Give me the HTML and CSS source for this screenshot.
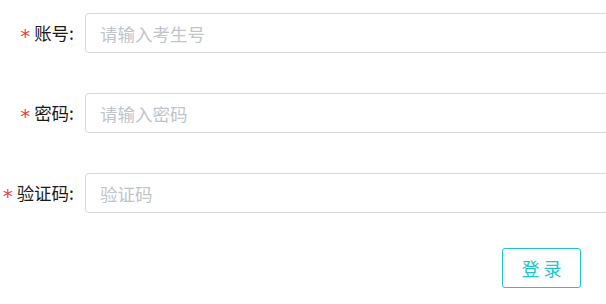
FILE: index.html
```html
<!DOCTYPE html>
<html lang="zh">
<head>
<meta charset="utf-8">
<link rel="stylesheet" href="styles.css">
</head>
<body>
<form class="login-form">
  <div class="form-item">
    <label class="form-label"><span class="req">*</span>账号:</label>
    <div class="form-content"><input class="text-input" type="text" placeholder="请输入考生号"></div>
  </div>
  <div class="form-item">
    <label class="form-label"><span class="req">*</span>密码:</label>
    <div class="form-content"><input class="text-input" type="password" placeholder="请输入密码"></div>
  </div>
  <div class="form-item">
    <label class="form-label"><span class="req">*</span>验证码:</label>
    <div class="form-content"><input class="text-input" type="text" placeholder="验证码"></div>
  </div>
  <div class="actions">
    <button class="login-btn" type="button">登 录</button>
  </div>
</form>
</body>
</html>
```
FILE: styles.css
```css
html, body {
  margin: 0;
  padding: 0;
  background: #ffffff;
  overflow: hidden;
}
body {
  font-family: "Noto Sans CJK SC", "Noto Sans", sans-serif;
  color: #222;
}
.login-form {
  width: 640px;
  padding-top: 13px;
}
.form-item {
  display: flex;
  align-items: center;
  height: 40px;
  margin-bottom: 40px;
}
.form-item:nth-child(3) {
  margin-bottom: 35px;
}
.form-label {
  width: 85px;
  box-sizing: border-box;
  padding-right: 11px;
  text-align: right;
  font-size: 17.5px;
  line-height: 40px;
  white-space: nowrap;
  color: #1a1a1a;
}
.req {
  font-family: "DejaVu Sans", sans-serif;
  color: #f0434d;
  margin-right: 4px;
  font-size: 20px;
  line-height: 1;
  vertical-align: -3px;
}
.form-content {
  flex: 1;
}
.text-input {
  display: block;
  width: 100%;
  height: 40px;
  box-sizing: border-box;
  border: 1px solid #d3d9dc;
  border-radius: 4px;
  padding: 0 14px;
  font-family: inherit;
  font-size: 17.5px;
  color: #333;
  outline: none;
}
.text-input::placeholder {
  color: #c0c4cc;
}
.actions {
  display: flex;
  width: 606px;
  justify-content: flex-end;
  padding-right: 25px;
  box-sizing: border-box;
}
.login-btn {
  width: 79px;
  height: 40px;
  box-sizing: border-box;
  border: 1px solid #1ec5c9;
  border-radius: 3px;
  background: #fff;
  color: #1ec5c9;
  font-family: inherit;
  font-size: 18px;
  padding: 0;
  cursor: pointer;
}
```
